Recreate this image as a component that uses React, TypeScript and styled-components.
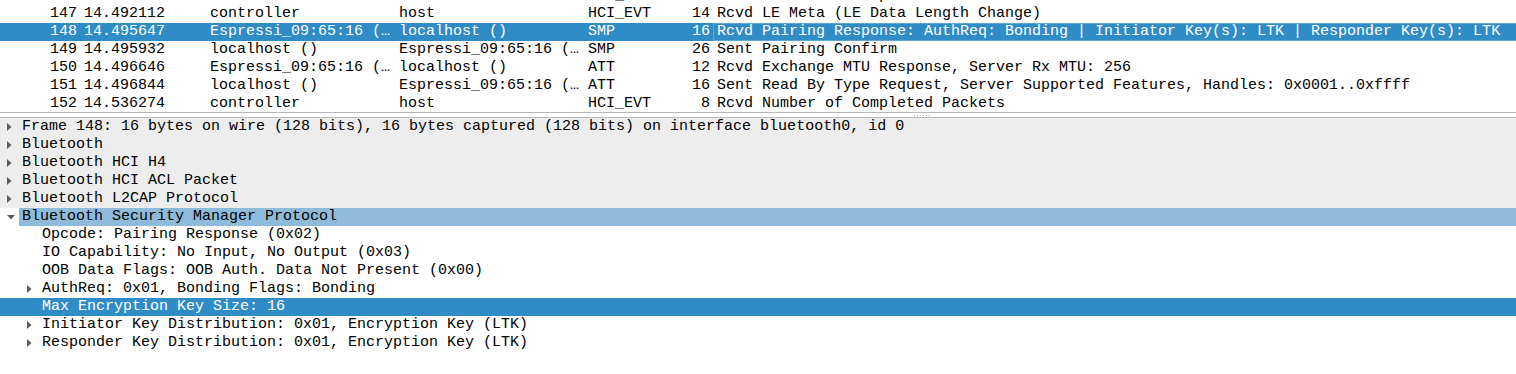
import styled, { createGlobalStyle } from 'styled-components'

type Packet = {
  no: number;
  time: string;
  src: string;
  dst: string;
  proto: string;
  len: number;
  info: string;
};

type TreeItem = {
  label: string;
  level: number;
  expander?: 'open' | 'closed';
  shaded?: boolean;
  ancestor?: boolean;
  selected?: boolean;
};

const packets: Packet[] = [
  { no: 146, time: '14.492063', src: 'controller', dst: 'host', proto: 'HCI_EVT', len: 8, info: 'Rcvd Number of Completed Packets' },
  { no: 147, time: '14.492112', src: 'controller', dst: 'host', proto: 'HCI_EVT', len: 14, info: 'Rcvd LE Meta (LE Data Length Change)' },
  { no: 148, time: '14.495647', src: 'Espressi_09:65:16 (…', dst: 'localhost ()', proto: 'SMP', len: 16, info: 'Rcvd Pairing Response: AuthReq: Bonding | Initiator Key(s): LTK | Responder Key(s): LTK' },
  { no: 149, time: '14.495932', src: 'localhost ()', dst: 'Espressi_09:65:16 (…', proto: 'SMP', len: 26, info: 'Sent Pairing Confirm' },
  { no: 150, time: '14.496646', src: 'Espressi_09:65:16 (…', dst: 'localhost ()', proto: 'ATT', len: 12, info: 'Rcvd Exchange MTU Response, Server Rx MTU: 256' },
  { no: 151, time: '14.496844', src: 'localhost ()', dst: 'Espressi_09:65:16 (…', proto: 'ATT', len: 16, info: 'Sent Read By Type Request, Server Supported Features, Handles: 0x0001..0xffff' },
  { no: 152, time: '14.536274', src: 'controller', dst: 'host', proto: 'HCI_EVT', len: 8, info: 'Rcvd Number of Completed Packets' },
];

const selectedNo = 148;

const tree: TreeItem[] = [
  { label: 'Frame 148: 16 bytes on wire (128 bits), 16 bytes captured (128 bits) on interface bluetooth0, id 0', level: 0, expander: 'closed', shaded: true },
  { label: 'Bluetooth', level: 0, expander: 'closed', shaded: true },
  { label: 'Bluetooth HCI H4', level: 0, expander: 'closed', shaded: true },
  { label: 'Bluetooth HCI ACL Packet', level: 0, expander: 'closed', shaded: true },
  { label: 'Bluetooth L2CAP Protocol', level: 0, expander: 'closed', shaded: true },
  { label: 'Bluetooth Security Manager Protocol', level: 0, expander: 'open', ancestor: true },
  { label: 'Opcode: Pairing Response (0x02)', level: 1 },
  { label: 'IO Capability: No Input, No Output (0x03)', level: 1 },
  { label: 'OOB Data Flags: OOB Auth. Data Not Present (0x00)', level: 1 },
  { label: 'AuthReq: 0x01, Bonding Flags: Bonding', level: 1, expander: 'closed' },
  { label: 'Max Encryption Key Size: 16', level: 1, selected: true },
  { label: 'Initiator Key Distribution: 0x01, Encryption Key (LTK)', level: 1, expander: 'closed' },
  { label: 'Responder Key Distribution: 0x01, Encryption Key (LTK)', level: 1, expander: 'closed' },
];

const Expander = ({ state }: { state: 'open' | 'closed' }) =>
  state === 'closed' ? (
    <svg width="5" height="8" viewBox="0 0 5 8">
      <polygon points="0,0 4.5,4 0,8" fill="#5c5c5c" />
    </svg>
  ) : (
    <svg width="8" height="5" viewBox="0 0 8 5">
      <polygon points="0,0 8,0 4,4.5" fill="#5c5c5c" />
    </svg>
  );

export default function App() {
  return (
    <>
      <GlobalStyle />
      <Window>
        <PacketList>
          <PacketRows>
            {packets.map((p) => {
              const sel = p.no === selectedNo;
              return (
                <PacketRow key={p.no} $selected={sel}>
                  <Cell $right>{p.no}</Cell>
                  <Cell>{p.time}</Cell>
                  <Cell>{p.src}</Cell>
                  <Cell>{p.dst}</Cell>
                  <Cell>{p.proto}</Cell>
                  <Cell $right>{p.len}</Cell>
                  <Cell $focus={sel}>{p.info}</Cell>
                </PacketRow>
              );
            })}
          </PacketRows>
        </PacketList>
        <Splitter>
          <Grip />
        </Splitter>
        <DetailTree>
          {tree.map((t, i) => (
            <TreeRow key={i} $shaded={t.shaded} $selected={t.selected}>
              <Branch $level={t.level}>
                {t.expander && <Expander state={t.expander} />}
              </Branch>
              <TreeLabel $ancestor={t.ancestor}>{t.label}</TreeLabel>
            </TreeRow>
          ))}
        </DetailTree>
      </Window>
    </>
  );
}

const GlobalStyle = createGlobalStyle`
  html, body {
    margin: 0;
    background: #ffffff;
  }
  body {
    font-family: "Liberation Mono", "DejaVu Sans Mono", monospace;
    font-size: 15px;
    color: #000000;
  }
`;

const Window = styled.div`
  width: 1516px;
  height: 374px;
  overflow: hidden;
  display: flex;
  flex-direction: column;
  background: #ffffff;
`;

const PacketList = styled.div`
  height: 112px;
  overflow: hidden;
  border-bottom: 1px solid #b9b9b9;
  flex: none;
`;

const PacketRows = styled.div`
  margin-top: -13px;
`;

const PacketRow = styled.div<{ $selected?: boolean }>`
  display: grid;
  grid-template-columns: 80px 126px 189px 189px 76px 53px 1fr;
  height: 18px;
  line-height: 18px;
  white-space: nowrap;
  background: ${(p) => (p.$selected ? '#308cc6' : 'transparent')};
  color: ${(p) => (p.$selected ? '#ffffff' : '#000000')};
`;

const Cell = styled.div<{ $right?: boolean; $focus?: boolean }>`
  padding: 0 3px;
  overflow: hidden;
  text-align: ${(p) => (p.$right ? 'right' : 'left')};
  box-sizing: border-box;
  border: 1px solid ${(p) => (p.$focus ? 'rgba(255, 255, 255, 0.22)' : 'transparent')};
  border-right: none;
  line-height: 16px;
`;

const Splitter = styled.div`
  height: 4px;
  flex: none;
  display: flex;
  align-items: center;
  padding-left: 913px;
  border-bottom: 1px solid #b9b9b9;
`;

const Grip = styled.div`
  width: 17px;
  height: 1px;
  background-image: radial-gradient(circle, #b0b0b0 0.7px, transparent 0.8px);
  background-size: 3px 1px;
`;

const DetailTree = styled.div`
  flex: 1;
`;

const TreeRow = styled.div<{ $shaded?: boolean; $selected?: boolean }>`
  display: flex;
  height: 18px;
  line-height: 18px;
  white-space: nowrap;
  background: ${(p) => (p.$selected ? '#308cc6' : p.$shaded ? '#ededed' : 'transparent')};
  color: ${(p) => (p.$selected ? '#ffffff' : '#000000')};
`;

const Branch = styled.div<{ $level: number }>`
  flex: none;
  width: 19px;
  margin-left: ${(p) => p.$level * 20}px;
  display: flex;
  align-items: center;
  padding-left: 7px;
  box-sizing: border-box;
`;

const TreeLabel = styled.div<{ $ancestor?: boolean }>`
  flex: 1;
  padding-left: 3px;
  background: ${(p) => (p.$ancestor ? '#8fbbda' : 'transparent')};
`;
